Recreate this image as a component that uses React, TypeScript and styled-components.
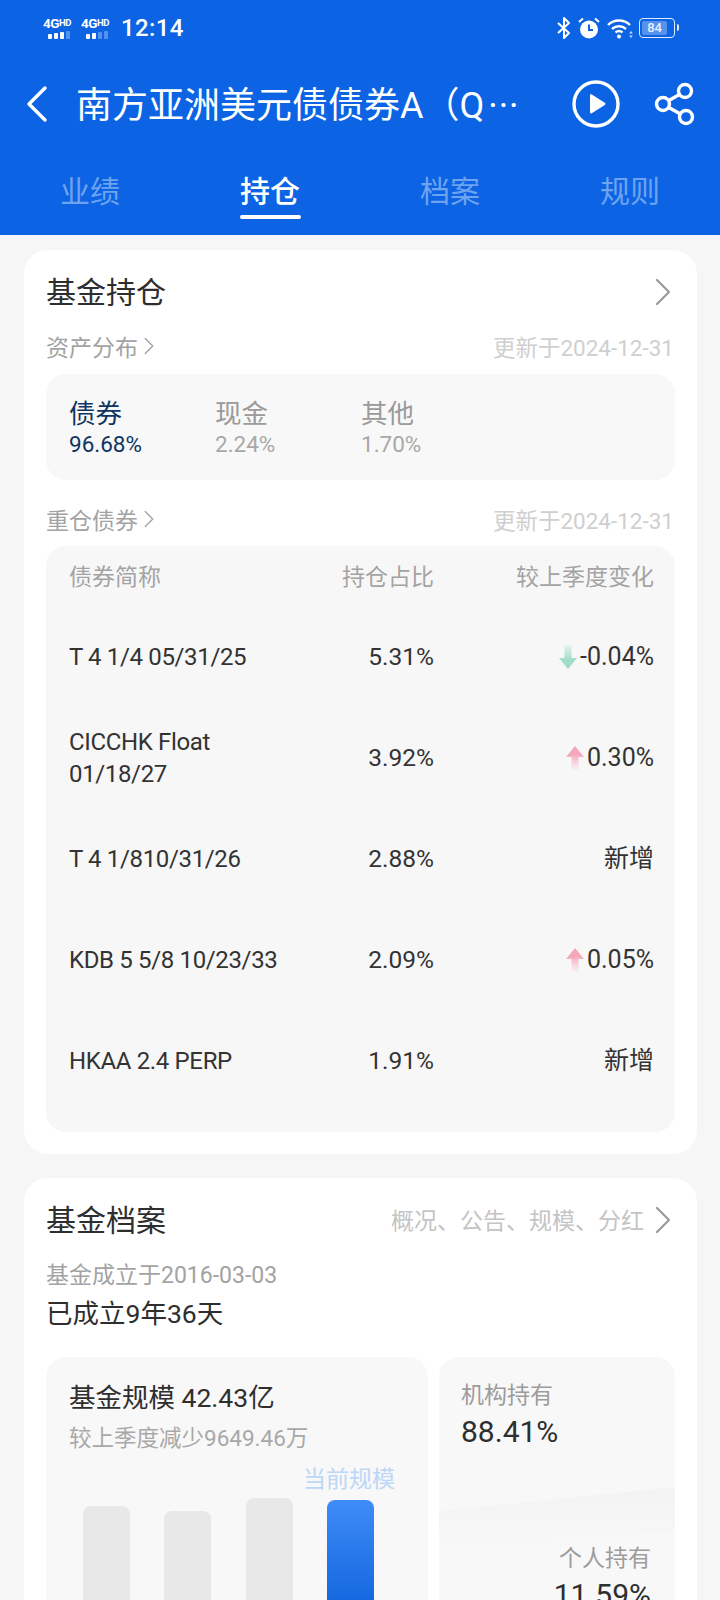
import React from "react";
import styled, { createGlobalStyle } from "styled-components";

const Global = createGlobalStyle`
  html, body { margin: 0; padding: 0; background: #f6f6f6; }
  * { box-sizing: border-box; }
  body { font-family: Roboto, "Noto Sans CJK SC", sans-serif; }
`;

const Page = styled.div`
  width: 720px;
  height: 1600px;
  overflow: hidden;
  background: #f6f6f6;
`;

const Header = styled.header`
  height: 235px;
  background: #0c64e4;
  color: #fff;
`;

const StatusBar = styled.div`
  height: 56px;
  padding: 0 45px 0 42px;
  display: flex;
  align-items: center;
  justify-content: space-between;
`;

const StatusGroup = styled.div<{ $gap: number }>`
  display: flex;
  align-items: center;
  gap: ${(p) => p.$gap}px;
`;

const Time = styled.span`
  font-size: 24px;
  font-weight: 500;
  letter-spacing: 0.4px;
  margin-left: 3px;
`;

const Signal = styled.div`
  width: 30px;
  display: flex;
  flex-direction: column;
  align-items: center;
  line-height: 1;
`;

const SignalLabel = styled.span`
  font-size: 13.5px;
  font-weight: 700;
  line-height: 12px;
  letter-spacing: -0.4px;
  white-space: nowrap;
`;

const SignalHd = styled.span`
  font-size: 9.5px;
  vertical-align: 2px;
`;

const SignalBars = styled.div`
  margin-top: 2px;
  margin-left: 4px;
  display: flex;
  align-items: flex-end;
  gap: 2px;
  height: 8px;
`;

const SignalBar = styled.i<{ $h: number; $dim?: boolean }>`
  display: block;
  width: 4px;
  height: ${(p) => p.$h}px;
  background: ${(p) => (p.$dim ? "rgba(255,255,255,.3)" : "#fff")};
  border-radius: 1px;
`;

const Battery = styled.div`
  position: relative;
  width: 36px;
  height: 20px;
  border: 1.5px solid #dfeaff;
  border-radius: 4px;
  padding: 2px;
  display: flex;
`;

const BatteryFill = styled.div`
  flex: 0 0 84%;
  background: rgba(255, 255, 255, 0.3);
  border-radius: 2px;
  font-size: 13px;
  line-height: 13px;
  text-align: center;
  font-weight: 500;
  color: #e8f0ff;
`;

const BatteryCap = styled.i`
  position: absolute;
  right: -5px;
  top: 5px;
  width: 2px;
  height: 7px;
  background: #dfeaff;
  border-radius: 0 2px 2px 0;
`;

const NavBar = styled.div`
  height: 96px;
  display: flex;
  align-items: center;
  padding: 0 24px 0 23px;
`;

const Title = styled.h1`
  margin: 0 0 4px 26px;
  width: 462px;
  font-size: 36px;
  font-weight: 400;
  white-space: nowrap;
  overflow: hidden;
`;

const TitleDots = styled.span`
  letter-spacing: 1px;
  margin-left: 4px;
`;

const NavActions = styled.div`
  margin-left: auto;
  display: flex;
  align-items: center;
  gap: 33px;
`;

const Tabs = styled.nav`
  display: grid;
  grid-template-columns: repeat(4, 1fr);
  height: 83px;
`;

const Tab = styled.div<{ $active?: boolean }>`
  position: relative;
  text-align: center;
  font-size: 30px;
  line-height: 44px;
  padding-top: 18px;
  font-weight: ${(p) => (p.$active ? 500 : 400)};
  color: ${(p) => (p.$active ? "#fff" : "#6ea3f0")};
`;

const TabMark = styled.i`
  position: absolute;
  left: 50%;
  top: 63px;
  width: 61px;
  height: 4px;
  margin-left: -30px;
  border-radius: 2px;
  background: #fff;
`;

const Card = styled.section`
  width: 673px;
  margin: 15px 0 24px 24px;
  background: #fff;
  border-radius: 24px;
  padding: 21px 22px 22px 22px;
`;

const CardHead = styled.div`
  height: 42px;
  padding-right: 4px;
  display: flex;
  align-items: center;
  justify-content: space-between;
`;

const CardTitle = styled.h2`
  margin: 0 0 5px 0;
  font-size: 30px;
  font-weight: 400;
  color: #2e2e2e;
`;

const CardHint = styled.div`
  display: flex;
  align-items: center;
  gap: 11px;
  font-size: 23px;
  color: #c4c4c4;
`;

const HintText = styled.span`
  margin-bottom: 3px;
`;

const SectionRow = styled.div<{ $top: number }>`
  margin-top: ${(p) => p.$top}px;
  height: 30px;
  padding: 0 1px 4px 0;
  display: flex;
  align-items: center;
  justify-content: space-between;
`;

const SectionLabel = styled.div`
  display: flex;
  align-items: center;
  gap: 6px;
  font-size: 23px;
  color: #a3a3a3;
`;

const Updated = styled.span`
  font-size: 22.5px;
  color: #cfcfcf;
`;

const AssetPanel = styled.div`
  margin-top: 11px;
  height: 106px;
  border-radius: 20px;
  background: #f8f8f8;
  padding: 21px 23px 0;
  display: flex;
`;

const Asset = styled.div`
  width: 146px;
`;

const AssetName = styled.div<{ $on?: boolean }>`
  font-size: 26.5px;
  line-height: 38px;
  color: ${(p) => (p.$on ? "#0e3560" : "#9a9a9a")};
`;

const AssetValue = styled.div<{ $on?: boolean }>`
  font-size: 22.5px;
  line-height: 22px;
  color: ${(p) => (p.$on ? "#0e3560" : "#a8a8a8")};
`;

const TablePanel = styled.div`
  margin-top: 10px;
  border-radius: 20px;
  background: #f7f7f7;
  padding-bottom: 21px;
`;

const Row = styled.div<{ $head?: boolean }>`
  display: grid;
  grid-template-columns: 220px 145px 1fr;
  align-items: center;
  padding: ${(p) => (p.$head ? 4 : 0)}px 21px 0 23px;
  height: ${(p) => (p.$head ? 60 : 101)}px;
  font-size: ${(p) => (p.$head ? 23 : 24)}px;
  line-height: 32px;
  color: ${(p) => (p.$head ? "#a3a3a3" : "#333")};
`;

const NameCell = styled.div<{ $tight?: boolean }>`
  letter-spacing: ${(p) => (p.$tight ? "-0.35px" : "0")};
`;

const NumCell = styled.div<{ $size?: number }>`
  text-align: right;
  font-size: ${(p) => (p.$size ? `${p.$size}px` : "inherit")};
`;

const ChangeCell = styled.div`
  display: flex;
  align-items: center;
  justify-content: flex-end;
  gap: 3px;
  font-size: 25px;
`;

const Founded = styled.div`
  margin: 20px 0 0 0;
  font-size: 23px;
  line-height: 30px;
  color: #a3a3a3;
`;

const Age = styled.div`
  margin: 5px 0 0 0;
  font-size: 26.5px;
  line-height: 36px;
  color: #2e2e2e;
`;

const StatGrid = styled.div`
  margin-top: 25px;
  display: grid;
  grid-template-columns: 382px 1fr;
  gap: 11px;
`;

const ScalePanel = styled.div`
  border-radius: 20px 20px 0 0;
  background: #f8f8f8;
  padding: 23px 23px 0;
  height: 280px;
`;

const ScaleTitle = styled.div`
  font-size: 26.5px;
  line-height: 36px;
  color: #2e2e2e;
`;

const ScaleSub = styled.div`
  margin-top: 7px;
  font-size: 22.5px;
  line-height: 30px;
  color: #a8a8a8;
`;

const CurrentLabel = styled.div`
  margin: 12px 10px 0 0;
  text-align: right;
  font-size: 23px;
  line-height: 30px;
  color: #bcd7f7;
`;

const Bars = styled.div`
  height: 122px;
  padding-left: 14px;
  display: flex;
  align-items: flex-end;
  gap: 34.4px;
`;

const Bar = styled.div<{ $h: number; $on?: boolean }>`
  width: 47px;
  height: ${(p) => p.$h}px;
  border-radius: 8px 8px 0 0;
  background: ${(p) =>
    p.$on ? "linear-gradient(180deg, #3f8cf8 0%, #0f62db 100%)" : "#e8e8e8"};
`;

const HoldPanel = styled.div`
  position: relative;
  border-radius: 20px 20px 0 0;
  background: #f8f8f8;
  padding: 24px 24px 0 22px;
  height: 280px;
`;

const HoldWave = styled.svg`
  position: absolute;
  left: 0;
  top: 128px;
  width: 100%;
  height: 70px;
`;

const HoldLabel = styled.div<{ $right?: boolean; $top: number }>`
  position: relative;
  margin-top: ${(p) => p.$top}px;
  font-size: 23px;
  line-height: 30px;
  color: #9c9c9c;
  text-align: ${(p) => (p.$right ? "right" : "left")};
`;

const HoldValue = styled.div<{ $right?: boolean; $top: number }>`
  position: relative;
  margin-top: ${(p) => p.$top}px;
  font-size: 30px;
  line-height: 38px;
  color: #2e2e2e;
  text-align: ${(p) => (p.$right ? "right" : "left")};
`;

const Chevron = ({ w, h, c }: { w: number; h: number; c: string }) => (
  <svg width={w} height={h} viewBox="0 0 16 28" fill="none">
    <path d="M2 2l12 12L2 26" stroke={c} strokeWidth="2.2" strokeLinecap="round" strokeLinejoin="round" />
  </svg>
);

const DownArrow = () => (
  <svg width="18" height="24" viewBox="0 0 18 24">
    <defs>
      <linearGradient id="dn" x1="0" y1="0" x2="0" y2="1">
        <stop offset="0" stopColor="#a5dfcc" stopOpacity="0.2" />
        <stop offset="0.6" stopColor="#a0dcc8" />
      </linearGradient>
    </defs>
    <path d="M5.5 0h7v13H18l-9 11-9-11h5.5z" fill="url(#dn)" />
  </svg>
);

const UpArrow = () => (
  <svg width="18" height="24" viewBox="0 0 18 24">
    <defs>
      <linearGradient id="up" x1="0" y1="0" x2="0" y2="1">
        <stop offset="0.35" stopColor="#f4a6ba" />
        <stop offset="1" stopColor="#f9c9d4" stopOpacity="0.15" />
      </linearGradient>
    </defs>
    <path d="M9 0l9 11h-5.5v13h-7V11H0z" fill="url(#up)" />
  </svg>
);

const SignalIcon = ({ lit }: { lit: number }) => (
  <Signal>
    <SignalLabel>
      4G<SignalHd>HD</SignalHd>
    </SignalLabel>
    <SignalBars>
      {[5, 6, 7, 8].map((h, i) => (
        <SignalBar key={i} $h={h} $dim={i >= lit} />
      ))}
    </SignalBars>
  </Signal>
);

const rows = [
  { name: "T 4 1/4 05/31/25", pct: "5.31%", dir: "down", change: "-0.04%" },
  { name: "CICCHK Float 01/18/27", pct: "3.92%", dir: "up", change: "0.30%" },
  { name: "T 4 1/810/31/26", pct: "2.88%", change: "新增" },
  { name: "KDB 5 5/8 10/23/33", pct: "2.09%", dir: "up", change: "0.05%" },
  { name: "HKAA 2.4 PERP", pct: "1.91%", change: "新增" },
];

export default function App() {
  return (
    <Page>
      <Global />
      <Header>
        <StatusBar>
          <StatusGroup $gap={8}>
            <SignalIcon lit={3} />
            <SignalIcon lit={2} />
            <Time>12:14</Time>
          </StatusGroup>
          <StatusGroup $gap={5}>
            <svg width="16" height="24" viewBox="0 0 16 24" fill="none">
              <path d="M2 7l11 10-5 5V2l5 5L2 17" stroke="#fff" strokeWidth="2" strokeLinejoin="round" />
            </svg>
            <svg width="24" height="24" viewBox="0 0 24 24" fill="none">
              <circle cx="12" cy="13.5" r="9" fill="#fff" />
              <path d="M12 8.5v5.500h4" stroke="#0c64e4" strokeWidth="2" />
              <path d="M2 6l4-3.500M22 6l-4-3.500" stroke="#fff" strokeWidth="2" />
            </svg>
            <svg width="28" height="24" viewBox="0 0 28 24" fill="none">
              <path d="M2 9c6-6 16-6 22 0" stroke="#fff" strokeWidth="2.4" />
              <path d="M6 13c4-3.600 10-3.600 14 0" stroke="#fff" strokeWidth="2.4" />
              <path d="M9.500 16.500c2-1.600 5-1.600 7 0" stroke="#fff" strokeWidth="2.4" />
              <circle cx="13" cy="20.500" r="2" fill="#fff" />
              <path d="M25 15l1.800 2.500h-3.600zM25 22l-1.800-2.500h3.600z" fill="#cfe0ff" />
            </svg>
            <Battery>
              <BatteryFill>84</BatteryFill>
              <BatteryCap />
            </Battery>
          </StatusGroup>
        </StatusBar>
        <NavBar>
          <svg width="27" height="40" viewBox="0 0 27 40" fill="none">
            <path d="M22 4L6 20l16 16" stroke="#fff" strokeWidth="3.4" strokeLinecap="round" strokeLinejoin="round" />
          </svg>
          <Title>
            南方亚洲美元债债券A（Q<TitleDots>···</TitleDots>
          </Title>
          <NavActions>
            <svg width="50" height="50" viewBox="0 0 50 50" fill="none">
              <circle cx="25" cy="25" r="22" stroke="#fff" strokeWidth="3.4" />
              <path d="M19 16.500c0-1 1-1.500 1.800-1l13 8.300c.8.500.8 1.700 0 2.200l-13 8.300c-.8.500-1.800 0-1.800-1z" fill="#fff" />
            </svg>
            <svg width="42" height="44" viewBox="0 0 42 44" fill="none" stroke="#fff" strokeWidth="3.4">
              <circle cx="31" cy="9" r="6.500" />
              <circle cx="9" cy="22" r="6.500" />
              <circle cx="32" cy="35" r="6.500" />
              <path d="M14.800 18.500L25.500 12.500M14.800 25.500L26.500 32" />
            </svg>
          </NavActions>
        </NavBar>
        <Tabs>
          <Tab>业绩</Tab>
          <Tab $active>
            持仓
            <TabMark />
          </Tab>
          <Tab>档案</Tab>
          <Tab>规则</Tab>
        </Tabs>
      </Header>

      <Card>
        <CardHead>
          <CardTitle>基金持仓</CardTitle>
          <Chevron w={16} h={28} c="#9a9a9a" />
        </CardHead>
        <SectionRow $top={20}>
          <SectionLabel>
            资产分布
            <Chevron w={10} h={18} c="#a3a3a3" />
          </SectionLabel>
          <Updated>更新于2024-12-31</Updated>
        </SectionRow>
        <AssetPanel>
          <Asset>
            <AssetName $on>债券</AssetName>
            <AssetValue $on>96.68%</AssetValue>
          </Asset>
          <Asset>
            <AssetName>现金</AssetName>
            <AssetValue>2.24%</AssetValue>
          </Asset>
          <Asset>
            <AssetName>其他</AssetName>
            <AssetValue>1.70%</AssetValue>
          </Asset>
        </AssetPanel>
        <SectionRow $top={26}>
          <SectionLabel>
            重仓债券
            <Chevron w={10} h={18} c="#a3a3a3" />
          </SectionLabel>
          <Updated>更新于2024-12-31</Updated>
        </SectionRow>
        <TablePanel>
          <Row $head>
            <NameCell>债券简称</NameCell>
            <NumCell>持仓占比</NumCell>
            <NumCell>较上季度变化</NumCell>
          </Row>
          {rows.map((r) => (
            <Row key={r.name}>
              <NameCell $tight>{r.name}</NameCell>
              <NumCell $size={24.5}>{r.pct}</NumCell>
              <ChangeCell>
                {r.dir === "down" && <DownArrow />}
                {r.dir === "up" && <UpArrow />}
                {r.change}
              </ChangeCell>
            </Row>
          ))}
        </TablePanel>
      </Card>

      <Card>
        <CardHead>
          <CardTitle>基金档案</CardTitle>
          <CardHint>
            <HintText>概况、公告、规模、分红</HintText>
            <Chevron w={16} h={28} c="#9a9a9a" />
          </CardHint>
        </CardHead>
        <Founded>基金成立于2016-03-03</Founded>
        <Age>已成立9年36天</Age>
        <StatGrid>
          <ScalePanel>
            <ScaleTitle>基金规模 42.43亿</ScaleTitle>
            <ScaleSub>较上季度减少9649.46万</ScaleSub>
            <CurrentLabel>当前规模</CurrentLabel>
            <Bars>
              <Bar $h={111} />
              <Bar $h={106} />
              <Bar $h={119} />
              <Bar $h={117} $on />
            </Bars>
          </ScalePanel>
          <HoldPanel>
            <HoldWave viewBox="0 0 235 70" preserveAspectRatio="none">
              <defs>
                <linearGradient id="band" x1="0" y1="0" x2="0" y2="1">
                  <stop offset="0" stopColor="#f3f3f3" />
                  <stop offset="1" stopColor="#f8f8f8" />
                </linearGradient>
              </defs>
              <path d="M0 26L235 2v44L0 66z" fill="url(#band)" />
            </HoldWave>
            <HoldLabel $top={0}>机构持有</HoldLabel>
            <HoldValue $top={2}>88.41%</HoldValue>
            <HoldLabel $right $top={93}>个人持有</HoldLabel>
            <HoldValue $right $top={2}>11.59%</HoldValue>
          </HoldPanel>
        </StatGrid>
      </Card>
    </Page>
  );
}
